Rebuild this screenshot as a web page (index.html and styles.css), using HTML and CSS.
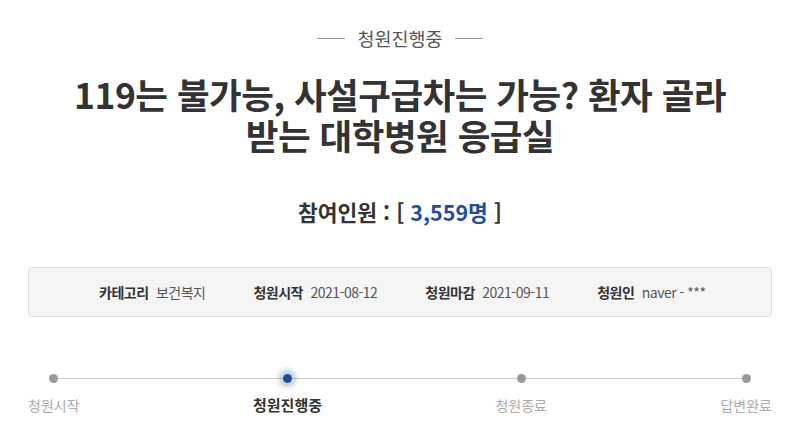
FILE: index.html
```html
<!DOCTYPE html>
<html lang="ko">
<head>
  <meta charset="UTF-8" />
  <meta name="viewport" content="width=device-width, initial-scale=1.0" />
  <title>청원진행중</title>
  <link rel="stylesheet" href="styles.css">
</head>
<body>
  <div class="container">
    <div class="state"><span class="state-line"></span><span>청원진행중</span><span class="state-line"></span></div>

    <h1 class="title">119는 불가능, 사설구급차는 가능? 환자 골라<br>받는 대학병원 응급실</h1>

    <p class="count">참여인원 : [ <span class="num">3,559명</span> ]</p>

    <ul class="info">
      <li><strong>카테고리</strong> 보건복지</li>
      <li><strong>청원시작</strong> 2021-08-12</li>
      <li><strong>청원마감</strong> 2021-09-11</li>
      <li><strong>청원인</strong> naver - ***</li>
    </ul>

    <div class="steps">
      <div class="step"><span class="dot"></span><span class="label">청원시작</span></div>
      <div class="step active"><span class="dot"></span><span class="label">청원진행중</span></div>
      <div class="step"><span class="dot"></span><span class="label">청원종료</span></div>
      <div class="step"><span class="dot"></span><span class="label">답변완료</span></div>
    </div>
  </div>
</body>
</html>
```

FILE: styles.css
```css
body {
  font-family: "Noto Sans CJK KR", "Noto Sans", sans-serif;
  background: #ffffff;
  color: #333333;
  margin: 0;
  padding: 0;
}
.container {
  width: 744px;
  margin: 0 auto;
  padding-top: 24px;
}
.state {
  display: flex;
  justify-content: center;
  align-items: center;
  gap: 12px;
  font-size: 18.5px;
  line-height: 28px;
  color: #555555;
}
.state-line {
  width: 28px;
  height: 1px;
  background: #999999;
}
.title {
  margin: 21px 0 0;
  text-align: center;
  font-size: 35.5px;
  line-height: 41px;
  font-weight: bold;
  letter-spacing: -0.5px;
  color: #333333;
}
.count {
  margin: 42px 0 0;
  text-align: center;
  font-size: 21.5px;
  line-height: 30px;
  font-weight: bold;
}
.count .num {
  color: #1f4ea0;
}
.info {
  list-style: none;
  margin: 40px 0 0;
  padding: 0 0 0 70px;
  height: 48px;
  display: flex;
  align-items: center;
  gap: 48px;
  background: #f5f5f5;
  border: 1px solid #dddddd;
  border-radius: 4px;
  font-size: 14px;
  color: #555555;
  letter-spacing: -0.5px;
}
.info strong {
  color: #333333;
  margin-right: 4px;
}
.steps {
  position: relative;
  display: flex;
  justify-content: space-between;
  margin-top: 55px;
}
.steps::before {
  content: "";
  position: absolute;
  left: 24px;
  right: 24px;
  top: 6px;
  height: 1px;
  background: #cccccc;
}
.step {
  position: relative;
  display: flex;
  flex-direction: column;
  align-items: center;
  gap: 12px;
}
.dot {
  width: 9px;
  height: 9px;
  margin-top: 2px;
  border-radius: 50%;
  background: #999999;
}
.step.active .dot {
  background: #1f4ea0;
  box-shadow: 0 0 0 4px rgba(31, 78, 160, 0.14), 0 0 0 7px rgba(31, 78, 160, 0.07);
}
.label {
  font-size: 14px;
  line-height: 20px;
  color: #aaaaaa;
}
.step.active .label {
  color: #333333;
  font-size: 15px;
  font-weight: bold;
}
```
